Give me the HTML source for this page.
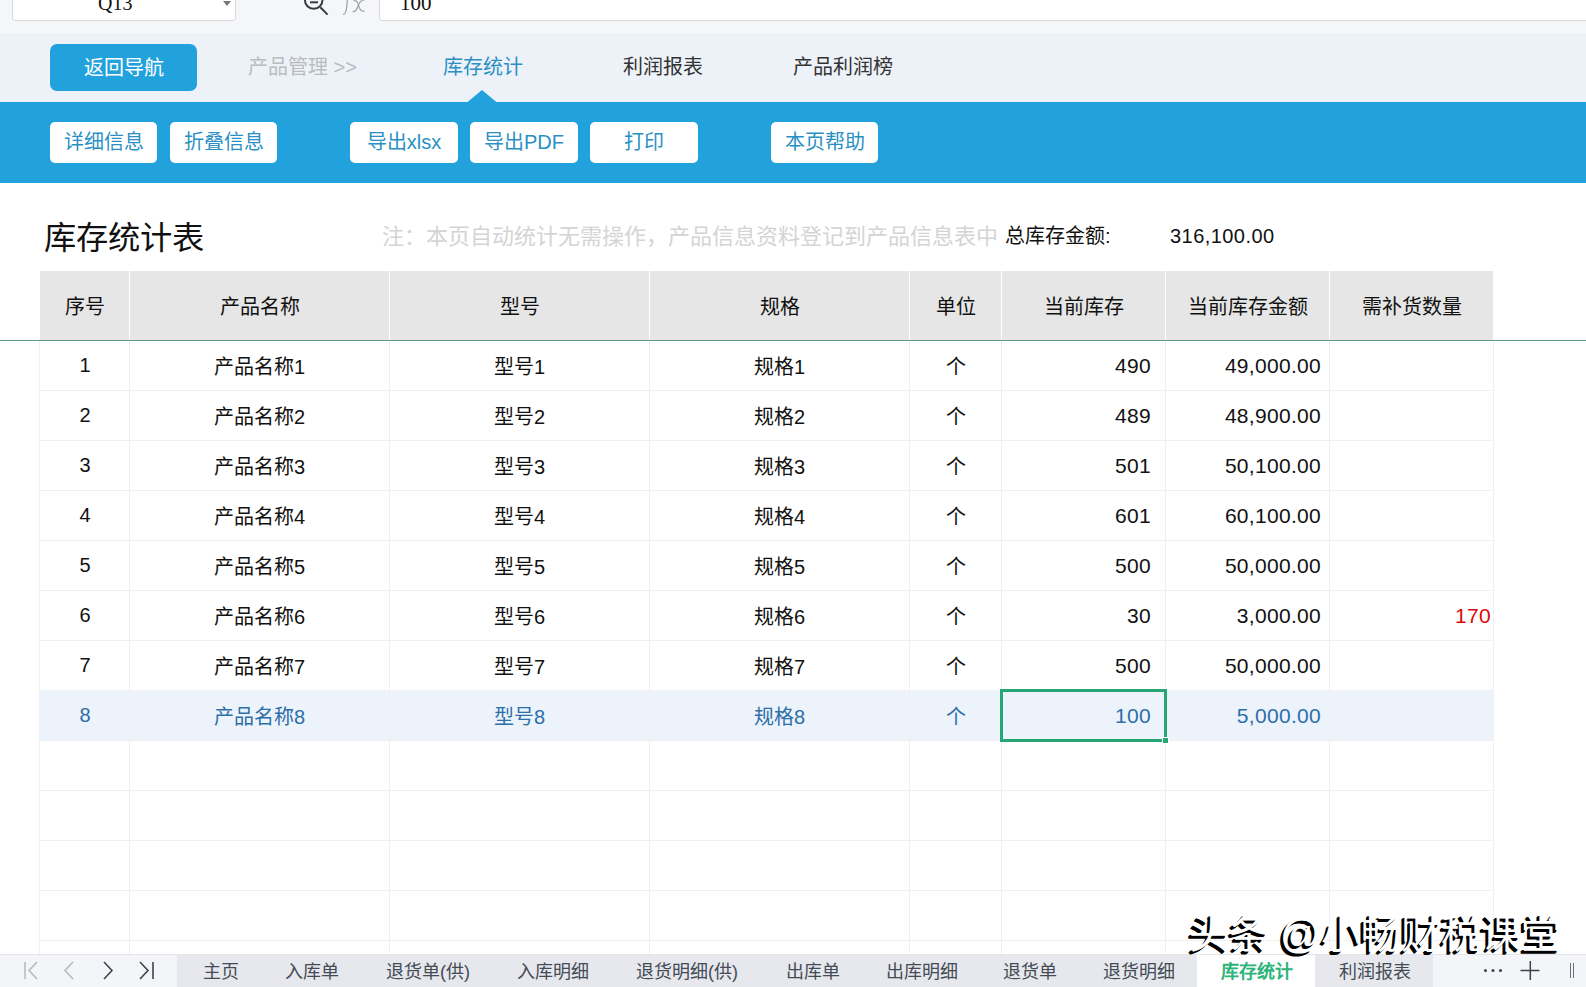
<!DOCTYPE html>
<html lang="zh-CN"><head><meta charset="utf-8">
<style>
*{margin:0;padding:0;box-sizing:border-box}
html,body{width:1586px;height:987px;overflow:hidden;background:#fff;font-family:"Liberation Sans",sans-serif;position:relative}
.abs{position:absolute}
#topbar{left:0;top:0;width:1586px;height:33px;background:#f4f6f8}
#namebox{left:12px;top:-10px;width:224px;height:31px;background:#fff;border:1px solid #d5d8dc;border-radius:3px}
#fbox{left:379px;top:-10px;width:1220px;height:31px;background:#fff;border:1px solid #d5d8dc;border-radius:3px}
#nav{left:0;top:33px;width:1586px;height:69px;background:#edf2f8}
#bluebar{left:0;top:102px;width:1586px;height:81px;background:#22a2dc}
.navbtn{top:44px;left:50px;width:147px;height:47px;background:#22a2dc;border-radius:7px;color:#fff;font-size:20px;text-align:center;line-height:47px;padding-top:1px}
.navtxt{top:53px;font-size:20px;line-height:28px;color:#333}
.wbtn{top:122px;height:41px;background:#fff;border-radius:5px;color:#2a90c4;font-size:20px;text-align:center;line-height:38px;padding-top:1px}
.hcell{position:absolute;top:271px;height:69px;background:#e6e6e6;font-size:20px;color:#111;text-align:center;line-height:69px;padding-top:2px}
.cell{position:absolute;height:49px;font-size:20px;color:#111;line-height:49px;white-space:nowrap}
.cell.num{font-size:21px;letter-spacing:0.3px}
.cell.hl{color:#2c6fa9}
.cell.red{color:#dc0a0a}
.vline{position:absolute;width:1px;background:#f0f0f0}
.hline{position:absolute;height:1px;background:#f0f0f0}
.tab{position:absolute;top:956px;height:32px;line-height:32px;font-size:18px;color:#444b55;white-space:nowrap}
</style></head><body>
<div id="topbar" class="abs"></div>
<div id="namebox" class="abs"></div>
<div class="abs" style="left:98px;top:-9px;font-family:'Liberation Serif',serif;font-size:20px;line-height:24px;color:#111">Q13</div>
<svg class="abs" style="left:222px;top:0" width="12" height="8"><path d="M1 1 L9 1 L5 6 Z" fill="#777"/></svg>
<svg class="abs" style="left:300px;top:-12px" width="80" height="30">
<circle cx="13.7" cy="12" r="8.8" fill="none" stroke="#363c45" stroke-width="2"/><path d="M10 14.3 H18" stroke="#363c45" stroke-width="2"/><path d="M20.3 19.2 L27.6 26.6" stroke="#363c45" stroke-width="2"/>
<path d="M50 2 Q47.5 8 46.8 18 Q46.3 25.5 43.2 26.6" fill="none" stroke="#a3a6aa" stroke-width="1.3"/>
<path d="M52.5 23.5 Q56 24.5 58 18 Q60.5 11.5 64.5 12" fill="none" stroke="#a3a6aa" stroke-width="1.3"/>
<path d="M53.5 13 Q57 11.5 58.5 17 Q60 24 64.5 23" fill="none" stroke="#a3a6aa" stroke-width="1.3"/>
</svg>
<div id="fbox" class="abs"></div>
<div class="abs" style="left:400px;top:-9px;font-family:'Liberation Serif',serif;font-size:21px;line-height:24px;color:#111">100</div>
<div id="nav" class="abs"></div>
<div id="bluebar" class="abs"></div>
<svg class="abs" style="left:467px;top:90px" width="30" height="13"><path d="M0 12.5 L15 0 L30 12.5 Z" fill="#22a2dc"/></svg>
<div class="abs navbtn">返回导航</div>
<div class="abs navtxt" style="left:248px;color:#b9bcc0">产品管理 &gt;&gt;</div>
<div class="abs navtxt" style="left:443px;color:#2a90c4">库存统计</div>
<div class="abs navtxt" style="left:623px">利润报表</div>
<div class="abs navtxt" style="left:793px">产品利润榜</div>

<div class="abs wbtn" style="left:50px;width:107px">详细信息</div>
<div class="abs wbtn" style="left:170px;width:107px">折叠信息</div>
<div class="abs wbtn" style="left:350px;width:108px">导出xlsx</div>
<div class="abs wbtn" style="left:470px;width:108px">导出PDF</div>
<div class="abs wbtn" style="left:590px;width:108px">打印</div>
<div class="abs wbtn" style="left:771px;width:107px">本页帮助</div>

<div class="abs" style="left:44px;top:217px;font-size:32.3px;line-height:42px;color:#111">库存统计表</div>
<div class="abs" style="left:382px;top:223px;font-size:22px;line-height:28px;color:#d4d4d4;white-space:nowrap">注：本页自动统计无需操作，产品信息资料登记到产品信息表中</div>
<div class="abs" style="left:1005px;top:222px;font-size:20px;line-height:28px;color:#111;white-space:nowrap">总库存金额:</div>
<div class="abs" style="left:1170px;top:222px;font-size:20px;line-height:28px;color:#111;white-space:nowrap;letter-spacing:0.45px">316,100.00</div>
<div class="abs" style="left:0;top:340px;width:1586px;height:1px;background:#599a82"></div>
<div class="hcell" style="left:40px;width:89px">序号</div>
<div class="hcell" style="left:130px;width:259px">产品名称</div>
<div class="hcell" style="left:390px;width:259px">型号</div>
<div class="hcell" style="left:650px;width:259px">规格</div>
<div class="hcell" style="left:910px;width:91px">单位</div>
<div class="hcell" style="left:1002px;width:163px">当前库存</div>
<div class="hcell" style="left:1166px;width:163px">当前库存金额</div>
<div class="hcell" style="left:1330px;width:163px">需补货数量</div>
<div class="abs" style="left:40px;top:691px;width:1453px;height:49px;background:#ecf3fa"></div>
<div class="vline" style="left:39px;top:341px;height:613px"></div>
<div class="vline" style="left:129px;top:341px;height:613px"></div>
<div class="vline" style="left:389px;top:341px;height:613px"></div>
<div class="vline" style="left:649px;top:341px;height:613px"></div>
<div class="vline" style="left:909px;top:341px;height:613px"></div>
<div class="vline" style="left:1001px;top:341px;height:613px"></div>
<div class="vline" style="left:1165px;top:341px;height:613px"></div>
<div class="vline" style="left:1329px;top:341px;height:613px"></div>
<div class="vline" style="left:1493px;top:341px;height:613px"></div>
<div class="abs" style="left:129px;top:271px;width:1px;height:69px;background:#fff"></div>
<div class="abs" style="left:389px;top:271px;width:1px;height:69px;background:#fff"></div>
<div class="abs" style="left:649px;top:271px;width:1px;height:69px;background:#fff"></div>
<div class="abs" style="left:909px;top:271px;width:1px;height:69px;background:#fff"></div>
<div class="abs" style="left:1001px;top:271px;width:1px;height:69px;background:#fff"></div>
<div class="abs" style="left:1165px;top:271px;width:1px;height:69px;background:#fff"></div>
<div class="abs" style="left:1329px;top:271px;width:1px;height:69px;background:#fff"></div>
<div class="hline" style="left:39px;top:390px;width:1455px"></div>
<div class="hline" style="left:39px;top:440px;width:1455px"></div>
<div class="hline" style="left:39px;top:490px;width:1455px"></div>
<div class="hline" style="left:39px;top:540px;width:1455px"></div>
<div class="hline" style="left:39px;top:590px;width:1455px"></div>
<div class="hline" style="left:39px;top:640px;width:1455px"></div>
<div class="hline" style="left:39px;top:690px;width:1455px"></div>
<div class="hline" style="left:39px;top:740px;width:1455px"></div>
<div class="hline" style="left:39px;top:790px;width:1455px"></div>
<div class="hline" style="left:39px;top:840px;width:1455px"></div>
<div class="hline" style="left:39px;top:890px;width:1455px"></div>
<div class="hline" style="left:39px;top:940px;width:1455px"></div>
<div class="cell" style="left:41px;top:341px;width:88px;text-align:center">1</div>
<div class="cell" style="left:130px;top:343px;width:259px;text-align:center">产品名称1</div>
<div class="cell" style="left:390px;top:343px;width:259px;text-align:center">型号1</div>
<div class="cell" style="left:650px;top:343px;width:259px;text-align:center">规格1</div>
<div class="cell" style="left:910px;top:343px;width:91px;text-align:center">个</div>
<div class="cell num" style="left:1002px;top:341px;width:149px;text-align:right">490</div>
<div class="cell num" style="left:1166px;top:341px;width:155px;text-align:right">49,000.00</div>
<div class="cell" style="left:41px;top:391px;width:88px;text-align:center">2</div>
<div class="cell" style="left:130px;top:393px;width:259px;text-align:center">产品名称2</div>
<div class="cell" style="left:390px;top:393px;width:259px;text-align:center">型号2</div>
<div class="cell" style="left:650px;top:393px;width:259px;text-align:center">规格2</div>
<div class="cell" style="left:910px;top:393px;width:91px;text-align:center">个</div>
<div class="cell num" style="left:1002px;top:391px;width:149px;text-align:right">489</div>
<div class="cell num" style="left:1166px;top:391px;width:155px;text-align:right">48,900.00</div>
<div class="cell" style="left:41px;top:441px;width:88px;text-align:center">3</div>
<div class="cell" style="left:130px;top:443px;width:259px;text-align:center">产品名称3</div>
<div class="cell" style="left:390px;top:443px;width:259px;text-align:center">型号3</div>
<div class="cell" style="left:650px;top:443px;width:259px;text-align:center">规格3</div>
<div class="cell" style="left:910px;top:443px;width:91px;text-align:center">个</div>
<div class="cell num" style="left:1002px;top:441px;width:149px;text-align:right">501</div>
<div class="cell num" style="left:1166px;top:441px;width:155px;text-align:right">50,100.00</div>
<div class="cell" style="left:41px;top:491px;width:88px;text-align:center">4</div>
<div class="cell" style="left:130px;top:493px;width:259px;text-align:center">产品名称4</div>
<div class="cell" style="left:390px;top:493px;width:259px;text-align:center">型号4</div>
<div class="cell" style="left:650px;top:493px;width:259px;text-align:center">规格4</div>
<div class="cell" style="left:910px;top:493px;width:91px;text-align:center">个</div>
<div class="cell num" style="left:1002px;top:491px;width:149px;text-align:right">601</div>
<div class="cell num" style="left:1166px;top:491px;width:155px;text-align:right">60,100.00</div>
<div class="cell" style="left:41px;top:541px;width:88px;text-align:center">5</div>
<div class="cell" style="left:130px;top:543px;width:259px;text-align:center">产品名称5</div>
<div class="cell" style="left:390px;top:543px;width:259px;text-align:center">型号5</div>
<div class="cell" style="left:650px;top:543px;width:259px;text-align:center">规格5</div>
<div class="cell" style="left:910px;top:543px;width:91px;text-align:center">个</div>
<div class="cell num" style="left:1002px;top:541px;width:149px;text-align:right">500</div>
<div class="cell num" style="left:1166px;top:541px;width:155px;text-align:right">50,000.00</div>
<div class="cell" style="left:41px;top:591px;width:88px;text-align:center">6</div>
<div class="cell" style="left:130px;top:593px;width:259px;text-align:center">产品名称6</div>
<div class="cell" style="left:390px;top:593px;width:259px;text-align:center">型号6</div>
<div class="cell" style="left:650px;top:593px;width:259px;text-align:center">规格6</div>
<div class="cell" style="left:910px;top:593px;width:91px;text-align:center">个</div>
<div class="cell num" style="left:1002px;top:591px;width:149px;text-align:right">30</div>
<div class="cell num" style="left:1166px;top:591px;width:155px;text-align:right">3,000.00</div>
<div class="cell red num" style="left:1330px;top:591px;width:161px;text-align:right">170</div>
<div class="cell" style="left:41px;top:641px;width:88px;text-align:center">7</div>
<div class="cell" style="left:130px;top:643px;width:259px;text-align:center">产品名称7</div>
<div class="cell" style="left:390px;top:643px;width:259px;text-align:center">型号7</div>
<div class="cell" style="left:650px;top:643px;width:259px;text-align:center">规格7</div>
<div class="cell" style="left:910px;top:643px;width:91px;text-align:center">个</div>
<div class="cell num" style="left:1002px;top:641px;width:149px;text-align:right">500</div>
<div class="cell num" style="left:1166px;top:641px;width:155px;text-align:right">50,000.00</div>
<div class="cell hl" style="left:41px;top:691px;width:88px;text-align:center">8</div>
<div class="cell hl" style="left:130px;top:693px;width:259px;text-align:center">产品名称8</div>
<div class="cell hl" style="left:390px;top:693px;width:259px;text-align:center">型号8</div>
<div class="cell hl" style="left:650px;top:693px;width:259px;text-align:center">规格8</div>
<div class="cell hl" style="left:910px;top:693px;width:91px;text-align:center">个</div>
<div class="cell hl num" style="left:1002px;top:691px;width:149px;text-align:right">100</div>
<div class="cell hl num" style="left:1166px;top:691px;width:155px;text-align:right">5,000.00</div><div class="abs" style="left:1000px;top:689px;width:167px;height:53px;border:3px solid #25a673"></div>
<div class="abs" style="left:1163px;top:738px;width:5px;height:5px;background:#25a673;outline:1px solid #fff"></div>

<div class="abs" style="left:0;top:954px;width:1586px;height:33px;background:#f3f5f8;border-top:1px solid #e3e5e8"></div>
<div class="abs" style="left:177px;top:955px;width:1256px;height:32px;background:#e6e8ed"></div>
<div class="abs" style="left:1197px;top:955px;width:118px;height:32px;background:#fff"></div>
<svg class="abs" style="left:20px;top:958px" width="140" height="26">
 <path d="M5 4 V21" stroke="#b4b8bd" stroke-width="1.5" fill="none"/>
 <path d="M17 4 L9 12.5 L17 21" stroke="#b4b8bd" stroke-width="1.5" fill="none"/>
 <path d="M53 4 L45 12.5 L53 21" stroke="#b4b8bd" stroke-width="1.5" fill="none"/>
 <path d="M84 4 L92 12.5 L84 21" stroke="#3c4450" stroke-width="1.6" fill="none"/>
 <path d="M120 4 L128 12.5 L120 21" stroke="#3c4450" stroke-width="1.6" fill="none"/>
 <path d="M133 4 V21" stroke="#3c4450" stroke-width="1.6" fill="none"/>
</svg>
<div class="tab" style="left:203px">主页</div>
<div class="tab" style="left:285px">入库单</div>
<div class="tab" style="left:386px">退货单(供)</div>
<div class="tab" style="left:517px">入库明细</div>
<div class="tab" style="left:636px">退货明细(供)</div>
<div class="tab" style="left:786px">出库单</div>
<div class="tab" style="left:886px">出库明细</div>
<div class="tab" style="left:1003px">退货单</div>
<div class="tab" style="left:1103px">退货明细</div>
<div class="tab" style="left:1221px;color:#2db47a;font-weight:bold">库存统计</div>
<div class="tab" style="left:1339px">利润报表</div>
<div class="abs" style="left:1484px;top:969px;width:3px;height:3px;border-radius:50%;background:#3a4250;box-shadow:7.5px 0 0 #3a4250,15px 0 0 #3a4250"></div>
<svg class="abs" style="left:1519px;top:960px" width="24" height="24"><path d="M11.3 1 V20 M1.5 10.6 H20.5" stroke="#3a4250" stroke-width="1.5"/></svg>
<div class="abs" style="left:1570px;top:963px;width:1px;height:15px;background:#6a717c;box-shadow:3px 0 0 #6a717c"></div>

<div class="abs" style="left:1189px;top:909px;font-size:40px;line-height:50px;color:#fff;white-space:nowrap;text-shadow:-2px 2px 0 #000,-3px 3px 0 #000">头条 @小畅财税课堂</div>
</body></html>
